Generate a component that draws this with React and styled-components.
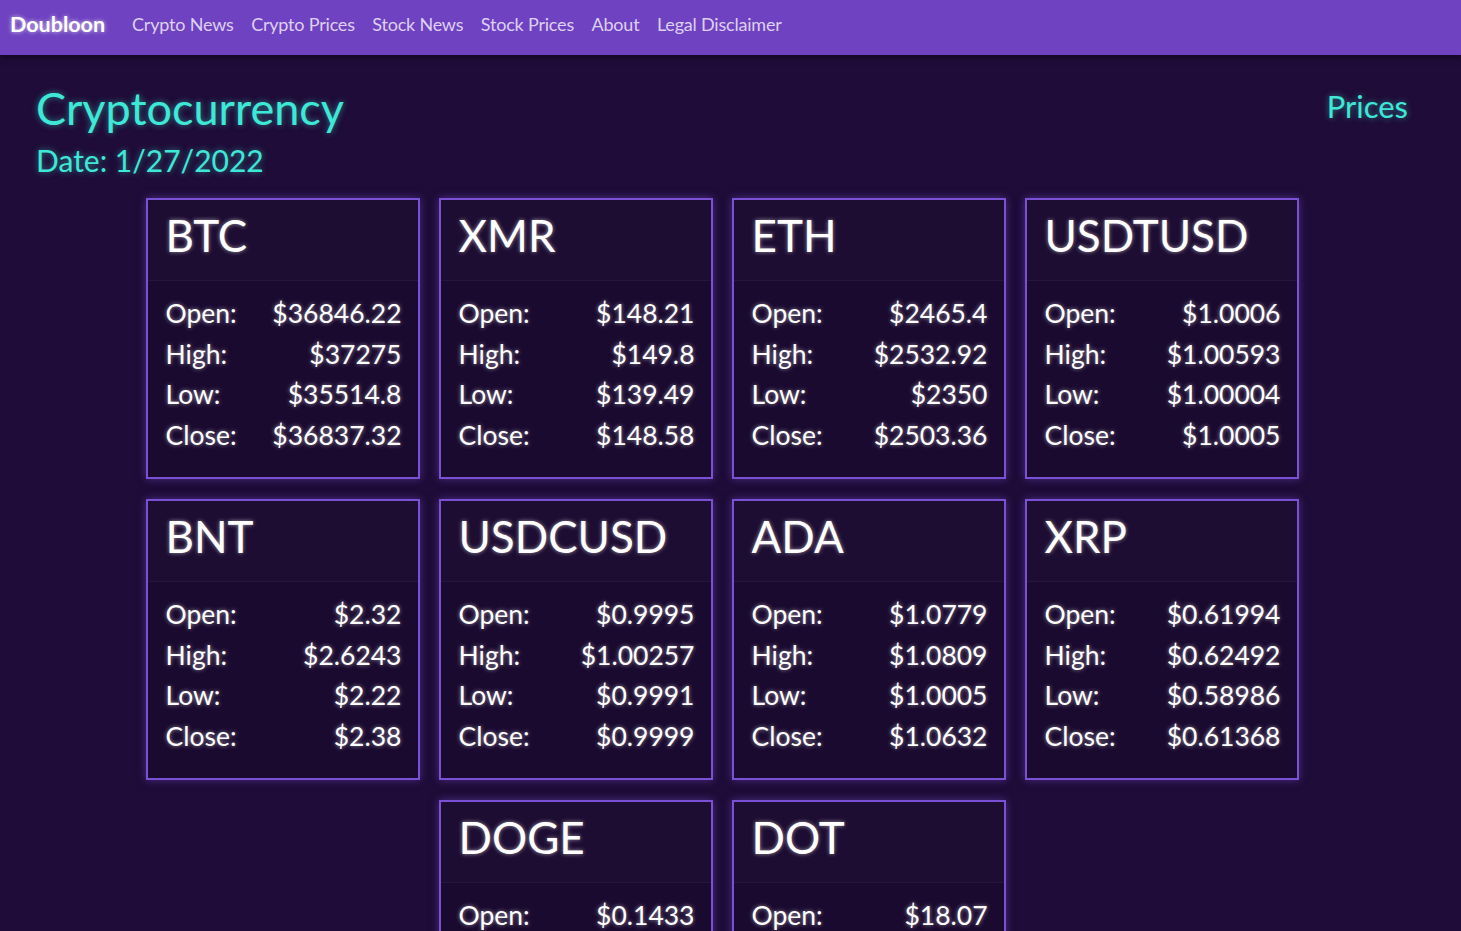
import styled, { createGlobalStyle } from 'styled-components';

const coins = [
  { name: 'BTC', open: '$36846.22', high: '$37275', low: '$35514.8', close: '$36837.32' },
  { name: 'XMR', open: '$148.21', high: '$149.8', low: '$139.49', close: '$148.58' },
  { name: 'ETH', open: '$2465.4', high: '$2532.92', low: '$2350', close: '$2503.36' },
  { name: 'USDTUSD', open: '$1.0006', high: '$1.00593', low: '$1.00004', close: '$1.0005' },
  { name: 'BNT', open: '$2.32', high: '$2.6243', low: '$2.22', close: '$2.38' },
  { name: 'USDCUSD', open: '$0.9995', high: '$1.00257', low: '$0.9991', close: '$0.9999' },
  { name: 'ADA', open: '$1.0779', high: '$1.0809', low: '$1.0005', close: '$1.0632' },
  { name: 'XRP', open: '$0.61994', high: '$0.62492', low: '$0.58986', close: '$0.61368' },
  { name: 'DOGE', open: '$0.1433', high: '$0.1501', low: '$0.1391', close: '$0.1437' },
  { name: 'DOT', open: '$18.07', high: '$18.55', low: '$17.2', close: '$18.11' },
];

const links = ['Crypto News', 'Crypto Prices', 'Stock News', 'Stock Prices', 'About', 'Legal Disclaimer'];

const App = () => (
  <>
    <GlobalStyle />
    <Nav>
      <Brand>Doubloon</Brand>
      <NavLinks>
        {links.map((l) => (
          <li key={l}>
            <NavLink href="#">{l}</NavLink>
          </li>
        ))}
      </NavLinks>
    </Nav>
    <Main>
      <PageHeader>
        <div>
          <Title>Cryptocurrency</Title>
          <DateLine>Date: 1/27/2022</DateLine>
        </div>
        <Side>Prices</Side>
      </PageHeader>
      <Grid>
        {coins.map((c) => (
          <Card key={c.name}>
            <CardHeader>{c.name}</CardHeader>
            <CardBody>
              <Row><span>Open:</span><span>{c.open}</span></Row>
              <Row><span>High:</span><span>{c.high}</span></Row>
              <Row><span>Low:</span><span>{c.low}</span></Row>
              <Row><span>Close:</span><span>{c.close}</span></Row>
            </CardBody>
          </Card>
        ))}
      </Grid>
    </Main>
  </>
);

export default App;

const GlobalStyle = createGlobalStyle`
  html, body {
    margin: 0;
    padding: 0;
    background: #1f0c38;
    font-family: Lato, "Open Sans", sans-serif;
  }
  * { box-sizing: border-box; }
`;

const Nav = styled.nav`
  display: flex;
  align-items: center;
  height: 55px;
  padding: 0 10px 8px;
  background-color: #6f42c1;
  box-shadow: 0 2px 6px rgba(10, 2, 25, 0.8);
  position: relative;
  z-index: 1;
`;

const Brand = styled.a`
  font-size: 21.5px;
  font-weight: 700;
  color: #fff;
  text-shadow: 0 0 4px rgba(255, 255, 255, 0.7);
  margin-right: 27px;
`;

const NavLinks = styled.ul`
  display: flex;
  gap: 17.5px;
  list-style: none;
  margin: 0;
  padding: 0;
`;

const NavLink = styled.a`
  font-size: 18px;
  color: #ddd0f3;
  text-decoration: none;
  letter-spacing: -0.2px;
`;

const Main = styled.main`
  padding: 28px 53px 0 36px;
`;

const PageHeader = styled.div`
  display: flex;
  justify-content: space-between;
  align-items: flex-start;
  color: #3ee8d6;
  text-shadow: 0 0 6px rgba(64, 224, 208, 0.55);
`;

const Title = styled.h1`
  margin: 0;
  font-size: 45px;
  font-weight: 400;
  line-height: 50px;
`;

const DateLine = styled.div`
  font-size: 30px;
  line-height: 36px;
  margin-top: 9px;
`;

const Side = styled.div`
  font-size: 31px;
  line-height: 40px;
  margin-top: 3px;
`;

const Grid = styled.div`
  display: flex;
  flex-wrap: wrap;
  justify-content: center;
  gap: 20px 19px;
  margin: 20px auto 0;
  max-width: 1160px;
`;

const Card = styled.div`
  width: 274px;
  height: 281px;
  border: 2px solid #7a50d4;
  background: #1a0a2f;
  box-shadow: 0 0 8px rgba(122, 80, 212, 0.5);
  color: #fff;
  text-shadow: 0 0 4px rgba(255, 255, 255, 0.55);
  display: flex;
  flex-direction: column;
`;

const CardHeader = styled.div`
  font-size: 44px;
  line-height: 56px;
  padding: 7px 18px 17px;
  border-bottom: 1px solid rgba(255, 255, 255, 0.04);
  background: rgba(255, 255, 255, 0.015);
`;

const CardBody = styled.div`
  padding: 12px 16px 20px 18px;
`;

const Row = styled.div`
  display: flex;
  justify-content: space-between;
  font-size: 26.5px;
  line-height: 40.6px;
`;
